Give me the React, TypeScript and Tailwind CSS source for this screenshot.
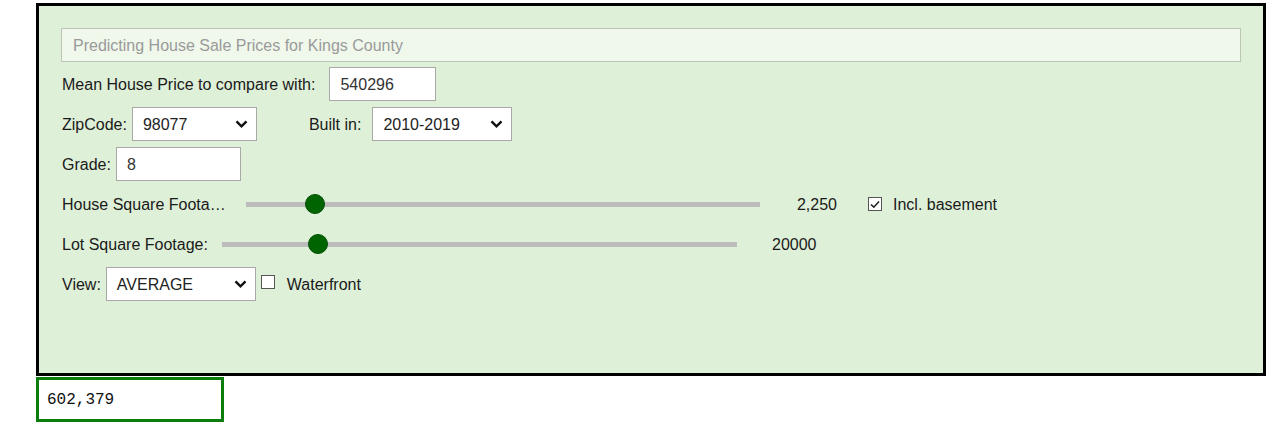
import React from "react";

const font = { fontFamily: '"Liberation Sans", Arial, sans-serif' };

function Chevron() {
  return (
    <svg
      className="pointer-events-none absolute right-[9px] top-1/2 -translate-y-1/2"
      width="13"
      height="9"
      viewBox="0 0 13 9"
      fill="none"
    >
      <path d="M1.5 1.8 L6.5 6.8 L11.5 1.8" stroke="#111" strokeWidth="2.4" />
    </svg>
  );
}

function Select({ value, width }: { value: string; width: string }) {
  return (
    <div className={`relative h-[34px] ${width}`}>
      <div className="flex h-full items-center border border-[#a8a8a8] bg-white pl-[10px] pt-[2px] text-[16px] text-[#222]">
        {value}
      </div>
      <Chevron />
    </div>
  );
}

function TextBox({ value, width }: { value: string; width: string }) {
  return (
    <div
      className={`flex h-[34px] items-center border border-[#a8a8a8] bg-white pl-[10px] pt-[2px] text-[16px] text-[#333] ${width}`}
    >
      {value}
    </div>
  );
}

function Check({ checked }: { checked: boolean }) {
  return (
    <div className="flex h-[14px] w-[14px] items-center justify-center border border-[#555] bg-white">
      {checked && (
        <svg width="10" height="9" viewBox="0 0 10 9" fill="none">
          <path d="M1 4.5 L3.8 7.2 L9 1.5" stroke="#222" strokeWidth="1.6" />
        </svg>
      )}
    </div>
  );
}

function Slider({ width, thumb }: { width: string; thumb: number }) {
  return (
    <div className={`relative h-[20px] ${width}`}>
      <div className="absolute left-0 right-0 top-[8px] h-[5px] bg-[#bcbcbc]" />
      <div
        className="absolute top-0 h-[20px] w-[20px] rounded-full border border-[#034f03] bg-[#006400]"
        style={{ left: thumb - 10 }}
      />
    </div>
  );
}

export default function App() {
  return (
    <div className="bg-white" style={font}>
      <div className="ml-[36px] mt-[3px] h-[373px] w-[1230px] border-[3px] border-black bg-[#dff0d8] p-[22px] text-[16px] text-[#1a1a1a]">
        <div className="flex h-[34px] items-center border border-[#bcc5b6] bg-[#f0f8ec] pl-[11px] pt-[2px] text-[#9a9a9a]">
          Predicting House Sale Prices for Kings County
        </div>

        <div className="mt-[5px] flex flex-col gap-[6px] pl-[1px]">
          <div className="flex h-[34px] items-center">
            <span className="mr-[14px] mt-[2px]">Mean House Price to compare with:</span>
            <TextBox value="540296" width="w-[107px]" />
          </div>

          <div className="flex h-[34px] items-center">
            <span className="mr-[5px] mt-[2px]">ZipCode:</span>
            <Select value="98077" width="w-[125px]" />
            <span className="ml-[52px] mr-[11px] mt-[2px]">Built in:</span>
            <Select value="2010-2019" width="w-[140px]" />
          </div>

          <div className="flex h-[34px] items-center">
            <span className="mr-[5px] mt-[2px]">Grade:</span>
            <TextBox value="8" width="w-[125px]" />
          </div>

          <div className="flex h-[34px] items-center">
            <span className="mt-[2px] w-[184px]">House Square Foota…</span>
            <Slider width="w-[514px]" thumb={69} />
            <span className="mt-[2px] w-[77px] text-right">2,250</span>
            <div className="ml-[31px]">
              <Check checked />
            </div>
            <span className="ml-[11px] mt-[2px]">Incl. basement</span>
          </div>

          <div className="flex h-[34px] items-center">
            <span className="mt-[2px] w-[160px]">Lot Square Footage:</span>
            <Slider width="w-[515px]" thumb={96} />
            <span className="ml-[35px] mt-[2px]">20000</span>
          </div>

          <div className="flex h-[34px] items-center">
            <span className="mr-[5px] mt-[2px]">View:</span>
            <Select value="AVERAGE" width="w-[150px]" />
            <div className="-mt-[4px] ml-[5px]">
              <Check checked={false} />
            </div>
            <span className="ml-[12px] mt-[2px]">Waterfront</span>
          </div>
        </div>
      </div>

      <div
        className="ml-[36px] mt-[1px] flex h-[45px] w-[188px] items-center border-[3px] border-[#0a7d0a] bg-white pl-[8px] text-[16px] text-[#111]"
        style={{ fontFamily: '"Liberation Mono", "Courier New", monospace' }}
      >
        602,379
      </div>
    </div>
  );
}
